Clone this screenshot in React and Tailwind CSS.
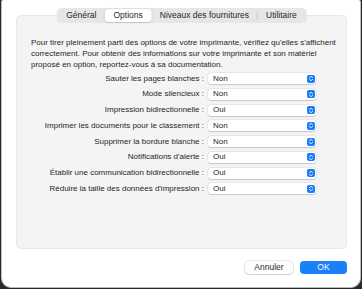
import React from "react";

const rows = [
  ["Sauter les pages blanches :", "Non"],
  ["Mode silencieux :", "Non"],
  ["Impression bidirectionnelle :", "Oui"],
  ["Imprimer les documents pour le classement :", "Non"],
  ["Supprimer la bordure blanche :", "Non"],
  ["Notifications d'alerte :", "Oui"],
  ["Établir une communication bidirectionnelle :", "Oui"],
  ["Réduire la taille des données d'impression :", "Oui"],
];

function Stepper() {
  return (
    <div className="w-[8px] h-[8px] rounded-[2px] bg-[#1a7cf5] flex items-center justify-center">
      <svg width="6" height="7" viewBox="0 0 6 7" fill="none">
        <path d="M1.5 2.7 L3 1.2 L4.5 2.7" stroke="white" strokeWidth="0.9" strokeLinecap="round" strokeLinejoin="round" />
        <path d="M1.5 4.3 L3 5.8 L4.5 4.3" stroke="white" strokeWidth="0.9" strokeLinecap="round" strokeLinejoin="round" />
      </svg>
    </div>
  );
}

export default function App() {
  return (
    <div className="w-[362px] h-[289px] bg-[#2a2a2a]" style={{ fontFamily: "'Liberation Sans', Arial, sans-serif" }}>
      <div className="ml-[1px] w-[360px] h-[288px] bg-white rounded-b-[10px] rounded-t-[2px] border border-[#bdbdbd] border-t-0 flex flex-col relative">
        <div className="ml-[14px] mr-[13px] mt-[15px] h-[234px] bg-[#f4f4f4] rounded-[5px] border border-[#e9e9e9] relative">
          <div className="absolute left-1/2 -translate-x-1/2 -top-[8px] flex items-center h-[15px] bg-[#e6e6e6] rounded-[5px] px-[2px] text-[8.5px] text-[#262626] whitespace-nowrap">
            <div className="px-[8px] h-[13px] flex items-center">Général</div>
            <div className="px-[9px] h-[13px] flex items-center bg-white rounded-[4px] shadow-[0_0.5px_1.5px_rgba(0,0,0,0.25)]">Options</div>
            <div className="px-[8px] h-[13px] flex items-center">Niveaux des fournitures</div>
            <div className="w-px h-[9px] bg-[#c8c8c8]"></div>
            <div className="px-[8px] h-[13px] flex items-center">Utilitaire</div>
          </div>
          <p className="pt-[21px] pl-[14px] pr-[6px] text-[8px] leading-[11px] text-[#262626]">
            Pour tirer pleinement parti des options de votre imprimante, vérifiez qu'elles s'affichent correctement. Pour obtenir des informations sur votre imprimante et son matériel proposé en option, reportez-vous à sa documentation.
          </p>
          <div className="mt-[3px] flex flex-col gap-[4.75px]">
            {rows.map(([label, val]) => (
              <div key={label} className="flex items-center h-[11px]">
                <div className="w-[187px] text-right text-[8px] text-[#262626] whitespace-nowrap">{label}</div>
                <div className="ml-[4px] w-[108px] h-[11px] bg-white rounded-[3px] shadow-[0_0_0_0.5px_rgba(0,0,0,0.08),0_0.5px_1px_rgba(0,0,0,0.15)] flex items-center justify-between pl-[5px] pr-[1px] text-[8px] text-[#262626]">
                  <span>{val}</span>
                  <Stepper />
                </div>
              </div>
            ))}
          </div>
        </div>
        <div className="flex justify-end gap-[7px] mt-[12px] mr-[13px]">
          <div className="w-[48px] h-[13px] bg-white rounded-[4px] shadow-[0_0_0_0.5px_rgba(0,0,0,0.15),0_0.5px_1.5px_rgba(0,0,0,0.2)] flex items-center justify-center text-[8.5px] text-[#262626]">Annuler</div>
          <div className="w-[47px] h-[13px] bg-[#1a80f8] rounded-[4px] flex items-center justify-center text-[8.5px] text-white">OK</div>
        </div>
      </div>
    </div>
  );
}
